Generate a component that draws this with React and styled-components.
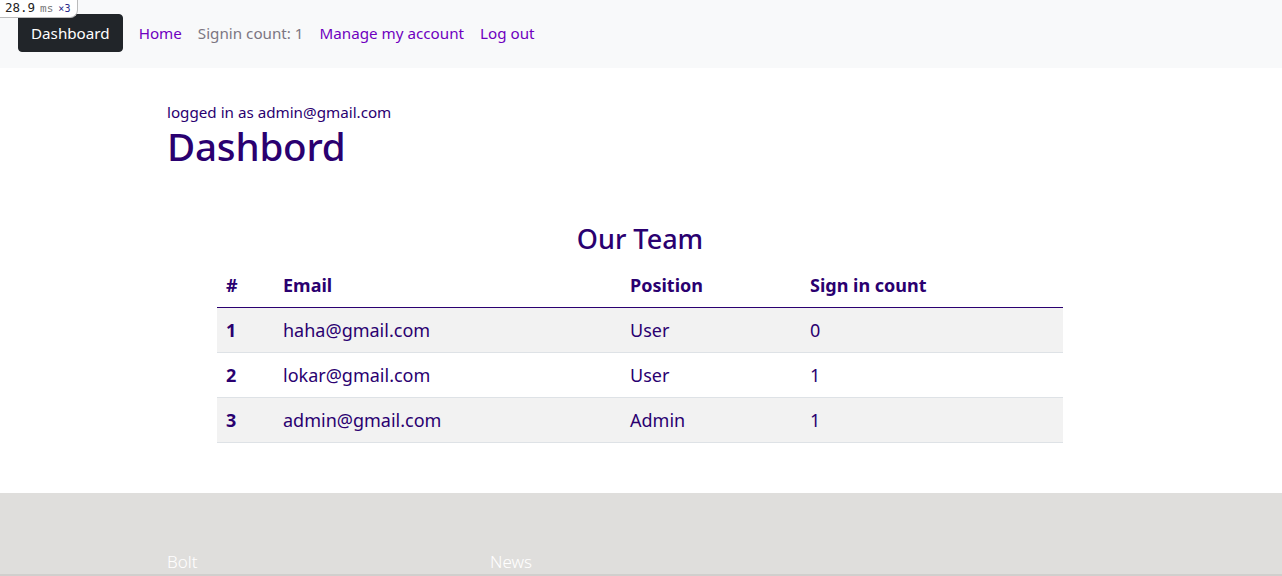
import React from "react";
import styled, { createGlobalStyle } from "styled-components";

const Global = createGlobalStyle`
  html, body { margin: 0; padding: 0; }
  body {
    font-family: "Noto Sans", "Open Sans", sans-serif;
    color: #2a0070;
    background: #ffffff;
    font-size: 16px;
    line-height: 1.5;
  }
`;

const Page = styled.div`
  position: relative;
  min-height: 576px;
  overflow: hidden;
`;

const Profiler = styled.div`
  position: absolute;
  top: 0;
  left: 0;
  z-index: 10;
  display: flex;
  align-items: baseline;
  gap: 5px;
  height: 17px;
  padding: 0 7px 0 5px;
  background: #fff;
  border: 1px solid #bbb;
  border-top: none;
  border-left: none;
  border-bottom-right-radius: 8px;
  font-family: "DejaVu Sans Mono", "Liberation Mono", monospace;
  font-size: 12.5px;
  line-height: 16px;
  color: #222;
`;

const Unit = styled.span`
  color: #777;
  font-size: 11px;
`;

const Count = styled.span`
  color: #2a2a8a;
  font-size: 10px;
`;

const NavBar = styled.nav`
  display: flex;
  align-items: center;
  padding: 14px 0 16px 18px;
  background: #f8f9fa;
`;

const Brand = styled.a`
  display: inline-block;
  background: #212529;
  color: #fff;
  border: 1px solid #212529;
  border-radius: 4px;
  padding: 6px 12px;
  font-size: 15.2px;
  line-height: 24px;
  margin-right: 8px;
  text-decoration: none;
`;

const NavLink = styled.a`
  padding: 0 8px;
  font-size: 15.2px;
  line-height: 24px;
  color: ${(p) => (p.$muted ? "#7c7682" : "#6f00c0")};
  text-decoration: none;
`;

const Main = styled.main`
  padding: 0 167px;
`;

const Logged = styled.p`
  margin: 0;
  padding-top: 33px;
  font-size: 15.2px;
  line-height: 22px;
`;

const Title = styled.h1`
  margin: 0;
  font-size: 38.6px;
  font-weight: 500;
  line-height: 46px;
  letter-spacing: -0.2px;
`;

const TeamSection = styled.section`
  width: 846px;
  margin: 53px 0 0 calc(50% - 424px);
`;

const TeamTitle = styled.h3`
  margin: 0 0 8px;
  text-align: center;
  font-size: 27px;
  font-weight: 500;
  line-height: 34px;
`;

const Table = styled.table`
  width: 100%;
  border-collapse: collapse;
  table-layout: fixed;
`;

const Th = styled.th`
  box-sizing: border-box;
  text-align: left;
  font-weight: 700;
  font-size: 18px;
  line-height: 27px;
  padding: 8px 9px;
  border-bottom: 1px solid #2a0070;
  width: ${(p) => p.$w || "auto"};
`;

const Row = styled.tr`
  background: ${(p) => (p.$striped ? "#f2f2f2" : "#ffffff")};
`;

const Td = styled.td`
  font-size: 18px;
  line-height: 28px;
  padding: 8px 9px;
  border-bottom: 1px solid #dee2e6;
  font-weight: ${(p) => (p.$bold ? 700 : 400)};
`;

const Footer = styled.footer`
  margin-top: 50px;
  background: #dfdedc;
`;

const FooterCols = styled.div`
  display: flex;
  padding: 57px 167px 0;
`;

const FooterCol = styled.div`
  width: 323px;
  color: #ffffff;
  font-size: 17px;
  font-weight: 300;
  line-height: 24px;
`;

const FooterRule = styled.div`
  border-top: 2px solid #d0cfcd;
  height: 40px;
`;

const team = [
  { id: 1, email: "haha@gmail.com", position: "User", count: 0 },
  { id: 2, email: "lokar@gmail.com", position: "User", count: 1 },
  { id: 3, email: "admin@gmail.com", position: "Admin", count: 1 },
];

export default function App() {
  return (
    <Page>
      <Global />
      <Profiler>
        28.9<Unit>ms</Unit>
        <Count>×3</Count>
      </Profiler>
      <NavBar>
        <Brand href="#">Dashboard</Brand>
        <NavLink href="#">Home</NavLink>
        <NavLink $muted>Signin count: 1</NavLink>
        <NavLink href="#">Manage my account</NavLink>
        <NavLink href="#">Log out</NavLink>
      </NavBar>
      <Main>
        <Logged>logged in as admin@gmail.com</Logged>
        <Title>Dashbord</Title>
      </Main>
      <TeamSection>
        <TeamTitle>Our Team</TeamTitle>
        <Table>
          <thead>
            <tr>
              <Th $w="57px">#</Th>
              <Th $w="347px">Email</Th>
              <Th $w="180px">Position</Th>
              <Th>Sign in count</Th>
            </tr>
          </thead>
          <tbody>
            {team.map((m, i) => (
              <Row key={m.id} $striped={i % 2 === 0}>
                <Td $bold>{m.id}</Td>
                <Td>{m.email}</Td>
                <Td>{m.position}</Td>
                <Td>{m.count}</Td>
              </Row>
            ))}
          </tbody>
        </Table>
      </TeamSection>
      <Footer>
        <FooterCols>
          <FooterCol>Bolt</FooterCol>
          <FooterCol>News</FooterCol>
        </FooterCols>
        <FooterRule />
      </Footer>
    </Page>
  );
}
